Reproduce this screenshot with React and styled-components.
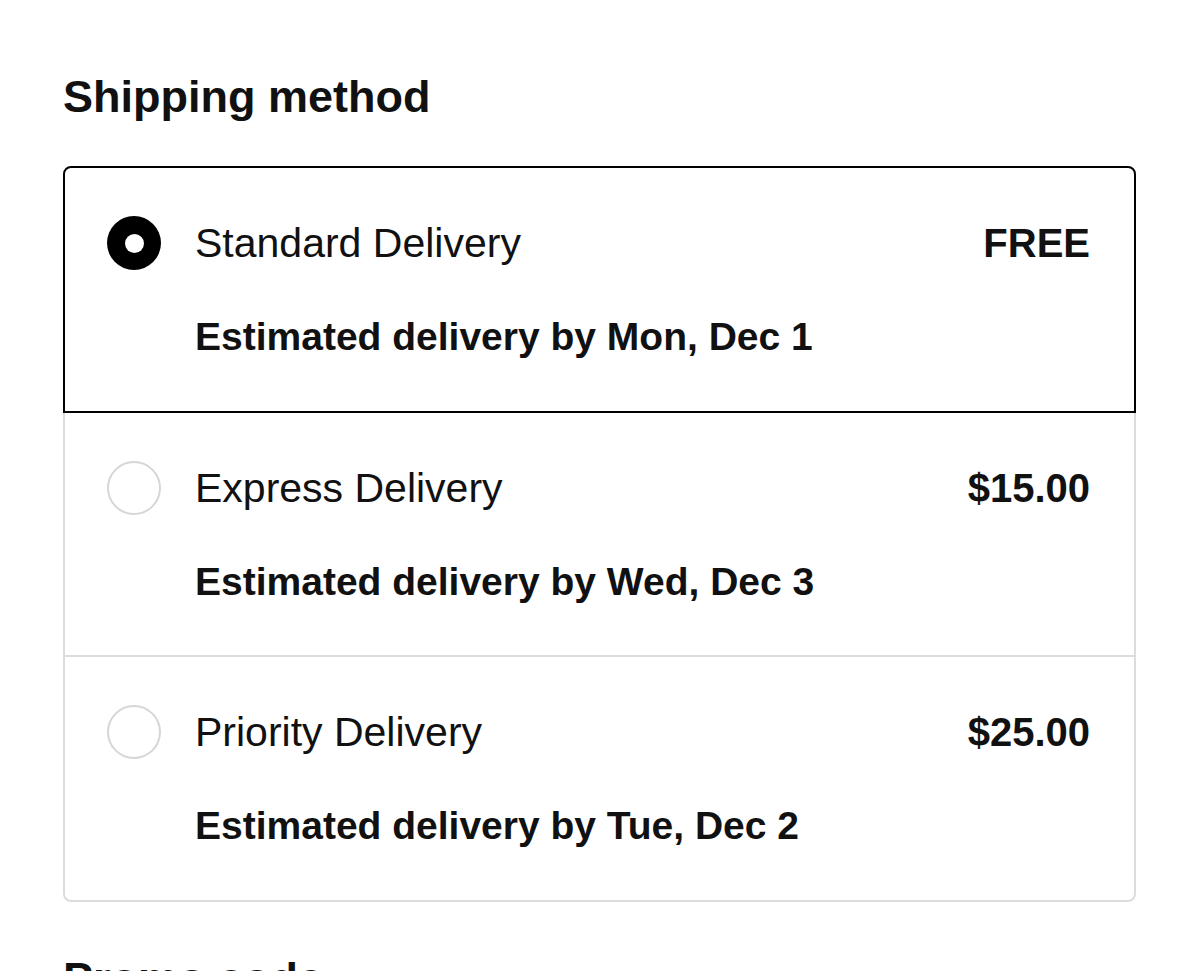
import styled, { createGlobalStyle } from 'styled-components';

const options = [
  {
    id: 'standard',
    label: 'Standard Delivery',
    price: 'FREE',
    estimate: 'Estimated delivery by Mon, Dec 1',
  },
  {
    id: 'express',
    label: 'Express Delivery',
    price: '$15.00',
    estimate: 'Estimated delivery by Wed, Dec 3',
  },
  {
    id: 'priority',
    label: 'Priority Delivery',
    price: '$25.00',
    estimate: 'Estimated delivery by Tue, Dec 2',
  },
];

const GlobalStyle = createGlobalStyle`
  html, body {
    margin: 0;
    padding: 0;
    background: #ffffff;
    overflow: hidden;
  }
  body {
    font-family: 'Liberation Sans', Arial, sans-serif;
    color: #111111;
  }
`;

const Page = styled.main`
  padding: 69px 64px 0 63px;
  height: 971px;
  box-sizing: border-box;
`;

const Heading = styled.h2`
  margin: 0;
  font-size: 45px;
  line-height: 55px;
  font-weight: 700;
  color: #111111;
`;

const Card = styled.div`
  display: flex;
  flex-direction: column;
  margin-top: 42px;
  margin-bottom: 49px;
`;

const Option = styled.label`
  position: relative;
  display: flex;
  flex-direction: column;
  gap: 44px;
  padding: 48px 44px 50.5px 42px;
  border: 2px solid ${(p) => (p.$selected ? '#000000' : '#dcdcdc')};
  z-index: ${(p) => (p.$selected ? 1 : 0)};
  cursor: pointer;

  & + & {
    margin-top: -2px;
  }

  &:first-child {
    border-top-left-radius: 8px;
    border-top-right-radius: 8px;
  }

  &:last-child {
    border-bottom-left-radius: 8px;
    border-bottom-right-radius: 8px;
  }
`;

const TopRow = styled.div`
  display: flex;
  align-items: center;
  gap: 34px;
  height: 54px;
`;

const Radio = styled.span`
  flex: 0 0 auto;
  width: 54px;
  height: 54px;
  box-sizing: border-box;
  border-radius: 50%;
  display: flex;
  align-items: center;
  justify-content: center;
  background: ${(p) => (p.$checked ? '#000000' : '#ffffff')};
  border: ${(p) => (p.$checked ? 'none' : '2px solid #d6d6d6')};

  &::after {
    content: '';
    display: ${(p) => (p.$checked ? 'block' : 'none')};
    width: 19px;
    height: 19px;
    border-radius: 50%;
    background: #ffffff;
  }
`;

const Label = styled.span`
  flex: 1;
  font-size: 41px;
  font-weight: 400;
  line-height: 46px;
  color: #111111;
`;

const Price = styled.span`
  font-size: 40px;
  font-weight: 700;
  line-height: 46px;
  color: #111111;
`;

const Estimate = styled.div`
  padding-left: 88px;
  font-size: 39px;
  font-weight: 700;
  line-height: 46px;
  color: #111111;
`;

export default function App() {
  const selected = 'standard';

  return (
    <>
      <GlobalStyle />
      <Page>
        <Heading>Shipping method</Heading>
        <Card role="radiogroup">
          {options.map((opt) => (
            <Option key={opt.id} $selected={opt.id === selected}>
              <TopRow>
                <Radio $checked={opt.id === selected} />
                <Label>{opt.label}</Label>
                <Price>{opt.price}</Price>
              </TopRow>
              <Estimate>{opt.estimate}</Estimate>
            </Option>
          ))}
        </Card>
        <Heading>Promo code</Heading>
      </Page>
    </>
  );
}
